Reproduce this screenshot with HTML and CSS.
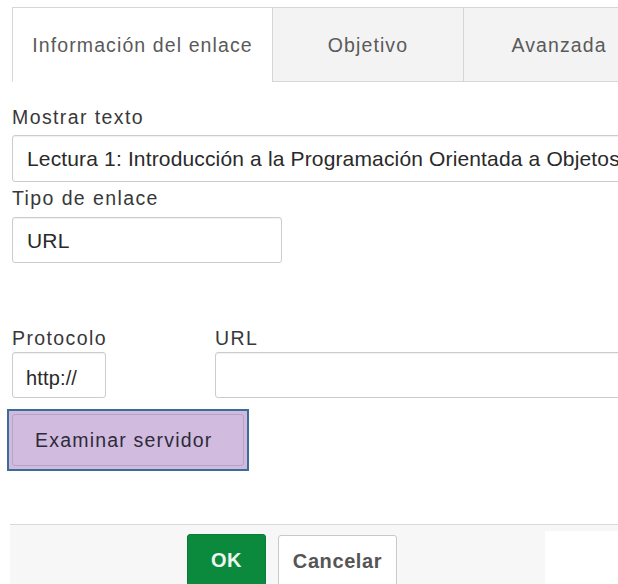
FILE: index.html
```html
<!DOCTYPE html>
<html lang="es">
<head>
<meta charset="utf-8">
<title>Insertar enlace</title>
<link rel="stylesheet" href="styles.css">
</head>
<body>
<div class="dialog">
  <div class="tabs">
    <div class="tab tab-active">Información del enlace</div>
    <div class="tab">Objetivo</div>
    <div class="tab">Avanzada</div>
  </div>

  <div class="panel">
    <div class="field field-text">
      <div class="label">Mostrar texto</div>
      <div class="input input-wide">Lectura 1: Introducción a la Programación Orientada a Objetos</div>
    </div>

    <div class="field field-type">
      <div class="label">Tipo de enlace</div>
      <div class="input input-select">URL</div>
    </div>

    <div class="row">
      <div class="field field-proto">
        <div class="label">Protocolo</div>
        <div class="input input-proto">http://</div>
      </div>
      <div class="field field-url">
        <div class="label">URL</div>
        <div class="input input-url"></div>
      </div>
    </div>

    <div class="browse-focus">
      <button class="browse" type="button">Examinar servidor</button>
    </div>
  </div>

  <div class="footer">
    <div class="footer-main">
      <button class="btn btn-ok" type="button">OK</button>
      <button class="btn btn-cancel" type="button">Cancelar</button>
    </div>
    <div class="footer-side"></div>
  </div>
</div>
</body>
</html>
```
FILE: styles.css
```css
html, body {
  margin: 0;
  padding: 0;
  background: #ffffff;
  overflow: hidden;
}

body {
  width: 618px;
  height: 584px;
  font-family: "Liberation Sans", Arial, sans-serif;
  font-size: 19.5px;
  color: #333333;
}

.dialog {
  width: 680px;
}

/* tab strip */
.tabs {
  display: flex;
  margin: 7px 0 0 12px;
  height: 75px;
}

.tab {
  box-sizing: border-box;
  width: 192px;
  height: 75px;
  display: flex;
  align-items: center;
  justify-content: center;
  border: 1px solid #d6d6d6;
  background: #f3f3f3;
  color: #5a5a5a;
  letter-spacing: 1.1px;
  padding-top: 2px;
}

.tab + .tab {
  margin-left: -1px;
}

.tab-active {
  width: 261px;
  background: #ffffff;
  border-bottom-color: #ffffff;
}

/* form panel */
.panel {
  padding: 0 12px;
}

.label {
  height: 24px;
  line-height: 24px;
  letter-spacing: 1.4px;
  color: #383838;
  white-space: nowrap;
}

.input {
  box-sizing: border-box;
  height: 47px;
  line-height: 45px;
  padding-left: 14px;
  border: 1px solid #cccccc;
  border-radius: 3px;
  box-shadow: inset 0 1px 1px rgba(0, 0, 0, 0.06);
  background: #ffffff;
  font-size: 21px;
  letter-spacing: 0.15px;
  color: #2a2a2a;
  white-space: nowrap;
  overflow: hidden;
}

.field-text {
  margin-top: 23px;
}

.field-text .input {
  margin-top: 6px;
}

.input-wide {
  width: 640px;
}

.field-type {
  margin-top: 4px;
}

.field-type .input {
  margin-top: 7px;
}

.input-select {
  width: 270px;
  height: 46px;
}

.row {
  display: flex;
  margin-top: 63px;
}

.field-proto .input,
.field-url .input {
  margin-top: 2px;
  height: 46px;
}

.field-proto {
  width: 94px;
}

.input-proto {
  width: 94px;
  padding-left: 13px;
  padding-top: 3px;
  font-size: 20px;
}

.field-url {
  margin-left: 109px;
}

.input-url {
  width: 420px;
}

/* focused browse button */
.browse-focus {
  display: inline-block;
  margin: 11px 0 0 -5px;
  padding: 3px;
  border: 2px solid #3d6c99;
  background: #d0bade;
}

.browse {
  display: block;
  width: 232px;
  height: 52px;
  margin: 0;
  padding: 0 0 0 2px;
  border: 1px solid #b8a3c8;
  border-radius: 3px;
  background: #d1bcdf;
  font-family: inherit;
  font-size: 19.5px;
  letter-spacing: 1.2px;
  color: #2e2a3a;
  text-align: left;
  text-indent: 20px;
}

/* footer with actions */
.footer {
  display: flex;
  margin: 53px 0 0 10px;
  height: 59px;
  border-top: 1px solid #d9d9d9;
}

.footer-main {
  width: 535px;
  background: #f7f7f7;
  padding: 9px 0 0 177px;
  box-sizing: border-box;
  display: flex;
  align-items: flex-start;
}

.footer-side {
  flex: 1;
  background: linear-gradient(#f7f7f7 0, #f7f7f7 6px, #ffffff 6px);
}

.btn {
  box-sizing: border-box;
  height: 52px;
  margin: 0;
  padding: 0;
  border-radius: 3px;
  font-family: inherit;
  font-size: 20px;
  font-weight: bold;
  letter-spacing: 0.6px;
}

.btn-ok {
  width: 79px;
  background: #0b8a3e;
  border: 1px solid #0a7a37;
  color: #eef6f0;
}

.btn-cancel {
  width: 119px;
  margin: 1px 0 0 12px;
  background: #ffffff;
  border: 1px solid #c9c9c9;
  color: #555555;
}
```
